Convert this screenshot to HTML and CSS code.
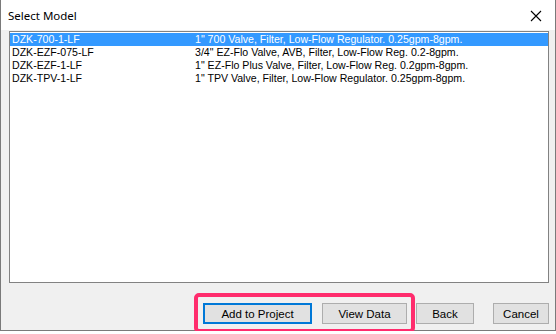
FILE: index.html
```html
<!DOCTYPE html>
<html lang="en">
<head>
  <meta charset="UTF-8">
  <title>Select Model</title>
  <link rel="stylesheet" href="styles.css">
</head>
<body>
  <div class="window">
    <div class="titlebar">
      <span class="title">Select Model</span>
      <svg class="close" width="12" height="12" viewBox="0 0 12 12">
        <path d="M1 1 L11 11 M11 1 L1 11" stroke="#000" stroke-width="1.1" fill="none"/>
      </svg>
    </div>

    <div class="client">
      <div class="list">
        <div class="row selected">
          <span class="code">DZK-700-1-LF</span>
          <span class="desc">1" 700 Valve, Filter, Low-Flow Regulator. 0.25gpm-8gpm.</span>
        </div>
        <div class="row">
          <span class="code">DZK-EZF-075-LF</span>
          <span class="desc">3/4" EZ-Flo Valve, AVB, Filter, Low-Flow Reg. 0.2-8gpm.</span>
        </div>
        <div class="row">
          <span class="code">DZK-EZF-1-LF</span>
          <span class="desc">1" EZ-Flo Plus Valve, Filter, Low-Flow Reg. 0.2gpm-8gpm.</span>
        </div>
        <div class="row">
          <span class="code">DZK-TPV-1-LF</span>
          <span class="desc">1" TPV Valve, Filter, Low-Flow Regulator. 0.25gpm-8gpm.</span>
        </div>
      </div>

      <div class="buttons">
        <button class="btn btn-add default">Add to Project</button>
        <button class="btn btn-view">View Data</button>
        <button class="btn btn-back">Back</button>
        <button class="btn btn-cancel">Cancel</button>
      </div>
    </div>

    <!-- annotation highlight -->
    <div class="highlight"></div>
  </div>
</body>
</html>
```

FILE: styles.css
```css
* {
  margin: 0;
  padding: 0;
  box-sizing: border-box;
}

body {
  background: #ffffff;
  font-family: 'Liberation Sans', Arial, sans-serif;
  color: #000;
}

.window {
  position: relative;
  width: 556px;
  height: 331px;
  border: 1px solid #7a7a7a;
  border-top: none;
  display: flex;
  flex-direction: column;
}

.titlebar {
  height: 30px;
  background: #ffffff;
  display: flex;
  align-items: center;
  justify-content: space-between;
  padding: 1px 13px 0 7px;
}

.title {
  font-family: 'Noto Sans', 'Open Sans', sans-serif;
  font-size: 11.5px;
  color: #000;
}

.close {
  display: block;
}

.client {
  flex: 1;
  background: #f0f0f0;
  padding: 1px 6px 0 8px;
  display: flex;
  flex-direction: column;
}

.list {
  height: 252px;
  background: #ffffff;
  border: 1px solid #828282;
  padding-top: 1px;
}

.row {
  display: flex;
  height: 13px;
  line-height: 13px;
  font-size: 10.6px;
  padding-left: 2px;
  white-space: nowrap;
}

.row.selected {
  background: #3399ff;
  color: #ffffff;
}

.code {
  width: 183px;
}

.buttons {
  display: flex;
  justify-content: flex-end;
  margin-top: 20px;
}

.btn {
  height: 21px;
  background: #e1e1e1;
  border: 1px solid #adadad;
  font-family: 'Liberation Sans', Arial, sans-serif;
  font-size: 11.5px;
  color: #000;
}

.btn.default {
  border: 2px solid #0078d7;
}

.btn-add {
  width: 109px;
  margin-right: 10px;
}

.btn-view {
  width: 85px;
  margin-right: 9px;
}

.btn-back {
  width: 58px;
  margin-right: 19px;
}

.btn-cancel {
  width: 56px;
}

.highlight {
  position: absolute;
  left: 193px;
  top: 293px;
  width: 221px;
  height: 40px;
  border: 4px solid #ff2c6d;
  border-radius: 5px;
}
```
